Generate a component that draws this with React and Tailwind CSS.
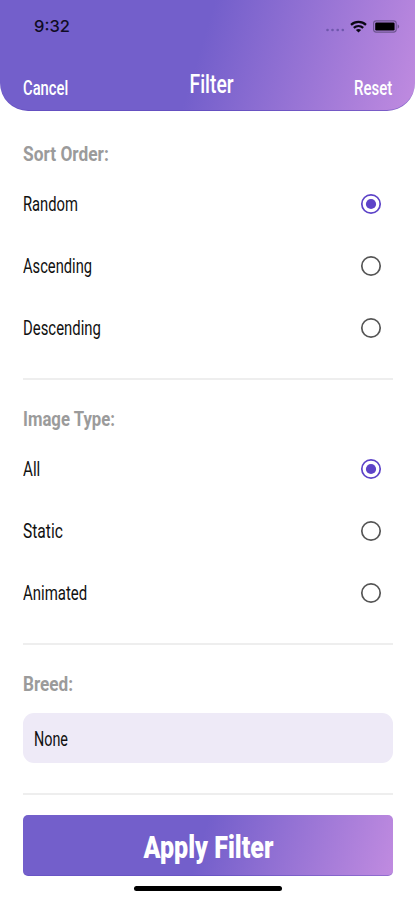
import { useState } from "react";

const SORT_OPTIONS = [
  { label: "Random", stretch: 0.72 },
  { label: "Ascending", stretch: 0.717 },
  { label: "Descending", stretch: 0.726 },
];

const IMAGE_OPTIONS = [
  { label: "All", stretch: 0.74 },
  { label: "Static", stretch: 0.76 },
  { label: "Animated", stretch: 0.73 },
];

// Condensed lettering: a regular face squeezed horizontally
function Narrow({ stretch, className = "", children }) {
  return (
    <span
      className={`inline-block whitespace-nowrap ${className}`}
      style={{ transform: `scaleX(${stretch})` }}
    >
      {children}
    </span>
  );
}

function StatusBar() {
  return (
    <div className="flex h-[52px] items-center justify-between pl-[34px] pr-[15px]">
      <span className="font-[Inter,sans-serif] text-[16.5px] font-medium leading-5 text-[#100c24]">9:32</span>
      <div className="flex items-center">
        <svg width="20" height="4" viewBox="0 0 20 4" className="mr-[5px] mt-2" fill="#6f57ac">
          <circle cx="2.5" cy="2" r="1.3" />
          <circle cx="7.5" cy="2" r="1.3" />
          <circle cx="12.7" cy="2" r="1.3" />
          <circle cx="17.8" cy="2" r="1.3" />
        </svg>
        <svg width="17" height="13" viewBox="0 0 17 13" className="mr-[6px]" fill="none" stroke="#0b0714" strokeWidth="2.2">
          <path d="M1 4.9C5.2.9 11.8.9 16 4.9" />
          <path d="M3.8 7.9C6.5 5.4 10.5 5.4 13.2 7.9" />
          <path d="M8.5 12.6 5.9 10C7.4 8.7 9.6 8.7 11.1 10Z" fill="#0b0714" stroke="none" />
        </svg>
        <svg width="27" height="13" viewBox="0 0 27 13">
          <rect x="0.6" y="0.9" width="22.6" height="11.2" rx="2.6" fill="none" stroke="#6d5590" strokeWidth="1.1" />
          <rect x="2.2" y="2.5" width="19.4" height="8" rx="1.2" fill="#000" />
          <path d="M24.6 4.3C26.7 5.2 26.7 7.8 24.6 8.7Z" fill="#6d5590" />
        </svg>
      </div>
    </div>
  );
}

function Header() {
  return (
    <header className="h-[111px] rounded-b-[28px] border-b border-[#5b46bb]/60 bg-[linear-gradient(107deg,#735fcb_0%,#735fcb_48%,#c08be0_100%)] text-white">
      <StatusBar />
      <div className="grid grid-cols-3 items-center px-[23px] pt-[16px]">
        <button className="h-10 text-left text-[20.5px] font-medium">
          <Narrow stretch={0.72} className="origin-left">Cancel</Narrow>
        </button>
        <h1 className="-mt-[6px] pl-[8px] text-center text-[25px] font-medium">
          <Narrow stretch={0.77} className="origin-center">Filter</Narrow>
        </h1>
        <button className="h-10 text-right text-[20.5px] font-medium">
          <Narrow stretch={0.73} className="origin-right">Reset</Narrow>
        </button>
      </div>
    </header>
  );
}

function SectionTitle({ stretch, children }) {
  return (
    <h2 className="flex h-[38px] items-center text-[20.5px] font-bold text-[#9b9b9b]">
      <Narrow stretch={stretch} className="origin-left">{children}</Narrow>
    </h2>
  );
}

function Radio({ checked }) {
  return (
    <svg width="22" height="22" viewBox="0 0 22 22" className="-mt-px">
      <circle cx="11" cy="11" r="9.2" fill="none" strokeWidth="1.7" stroke={checked ? "#5d43c8" : "#555"} />
      {checked && <circle cx="11" cy="11" r="5.1" fill="#5d43c8" />}
    </svg>
  );
}

function RadioGroup({ title, titleStretch, options }) {
  const [selected, setSelected] = useState(options[0].label);

  return (
    <section className="border-b-2 border-[#eeeeee] pb-[19px] pt-5">
      <SectionTitle stretch={titleStretch}>{title}</SectionTitle>
      {options.map(({ label, stretch }) => (
        <button
          key={label}
          onClick={() => setSelected(label)}
          className="flex h-[62px] w-full items-center justify-between pr-[11px] text-[20.5px] text-[#111]"
        >
          <Narrow stretch={stretch} className="origin-left">{label}</Narrow>
          <Radio checked={selected === label} />
        </button>
      ))}
    </section>
  );
}

export default function App() {
  return (
    <div className="h-[900px] w-[415px] overflow-hidden bg-white font-[Roboto,sans-serif]">
      <Header />

      <main className="pl-[23px] pr-[22px] pt-1">
        <RadioGroup title="Sort Order:" titleStretch={0.845} options={SORT_OPTIONS} />
        <RadioGroup title="Image Type:" titleStretch={0.817} options={IMAGE_OPTIONS} />

        {/* Breed */}
        <section className="border-b-2 border-[#eeeeee] pb-[30px] pt-5">
          <SectionTitle stretch={0.837}>Breed:</SectionTitle>
          <button className="mt-[10px] flex h-[50px] w-full items-center rounded-[11px] bg-[#eeeaf7] px-[11px] pt-[2px] text-[20.5px] text-[#111]">
            <Narrow stretch={0.7} className="origin-left">None</Narrow>
          </button>
        </section>

        <button className="mt-5 flex h-[61px] w-full items-center justify-center rounded-[5px] border-b border-[#5b46bb]/40 bg-[linear-gradient(107deg,#735fcb_0%,#735fcb_48%,#c08be0_100%)] pt-[6px] text-[31px] font-black text-white">
          <Narrow stretch={0.807} className="origin-center">Apply Filter</Narrow>
        </button>
      </main>

      {/* Home indicator */}
      <div className="mx-auto mt-[10px] h-[5px] w-[148px] rounded-full bg-black" />
    </div>
  );
}
